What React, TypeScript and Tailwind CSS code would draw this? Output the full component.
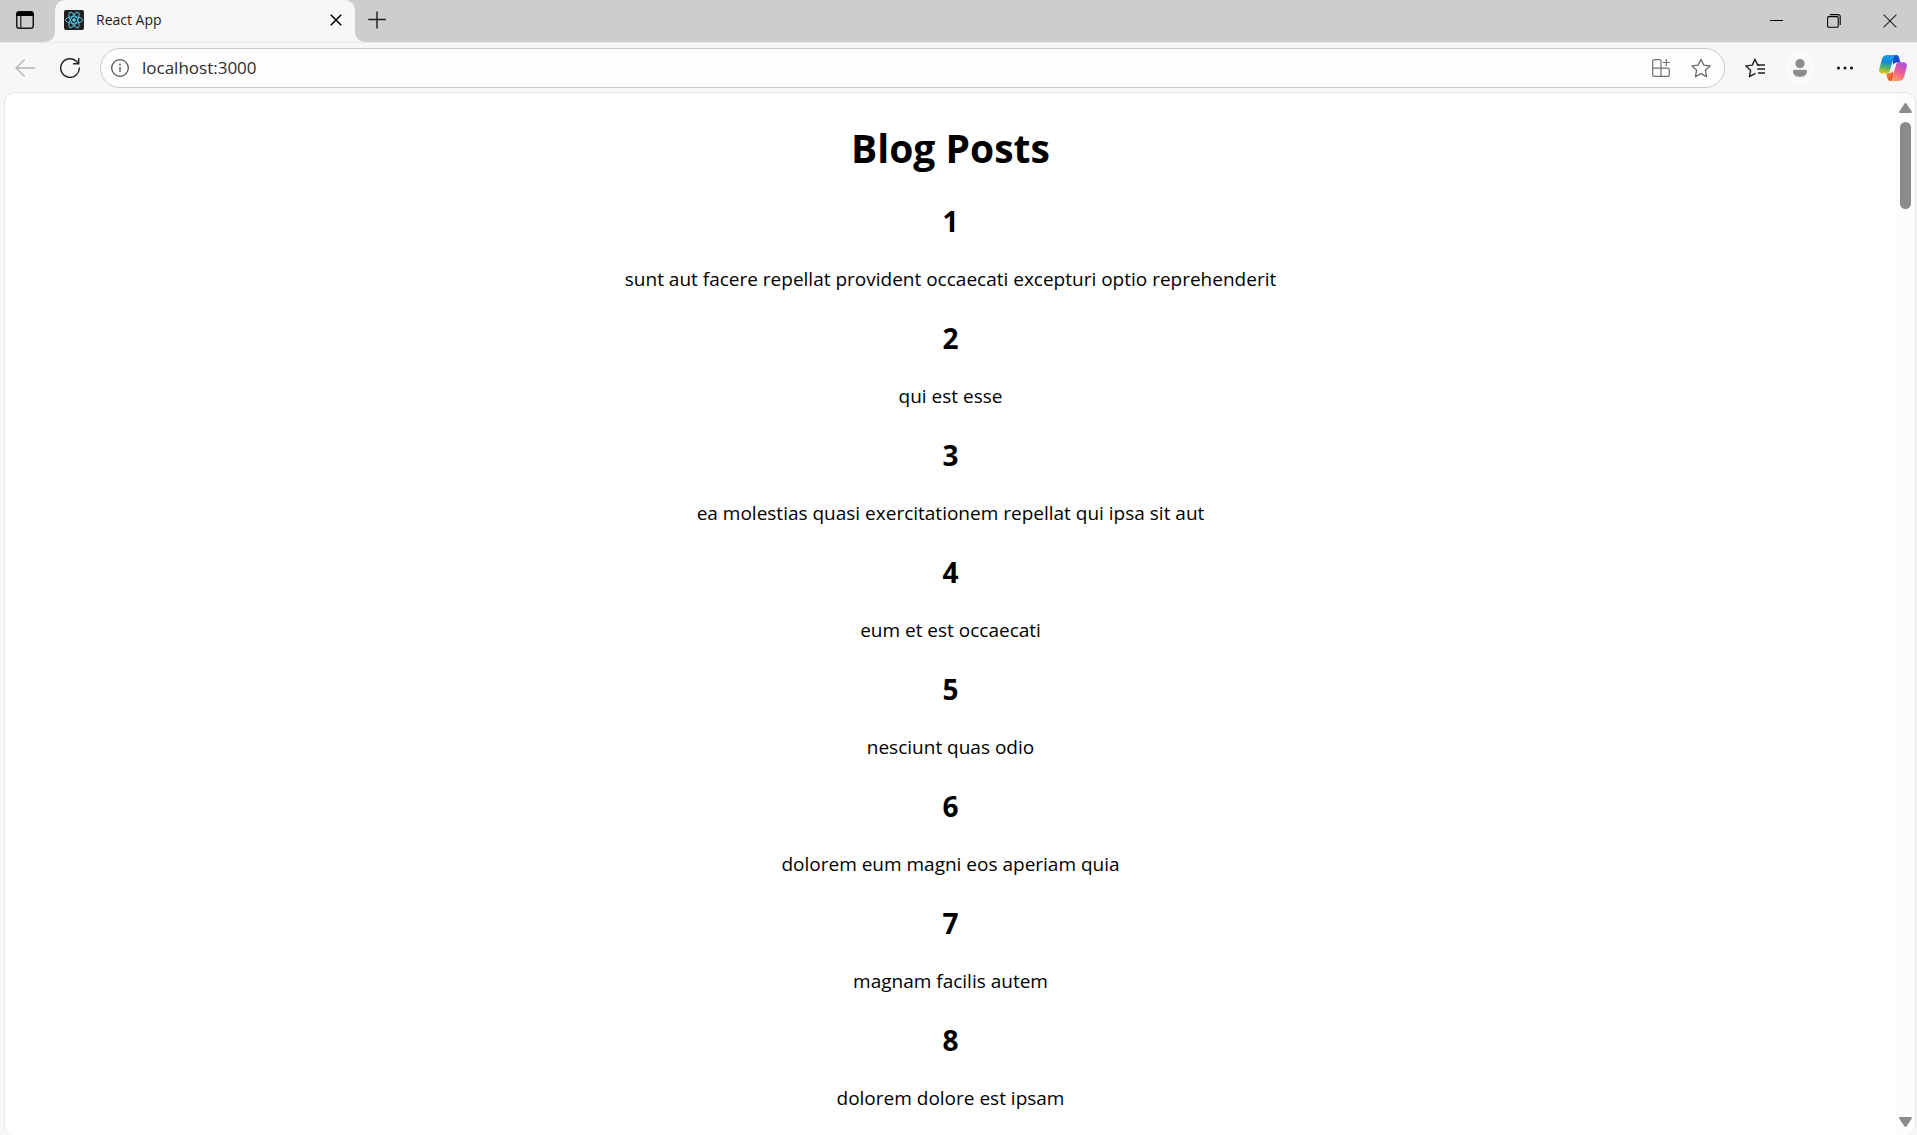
import React from "react";

const posts = [
  { id: 1, title: "sunt aut facere repellat provident occaecati excepturi optio reprehenderit" },
  { id: 2, title: "qui est esse" },
  { id: 3, title: "ea molestias quasi exercitationem repellat qui ipsa sit aut" },
  { id: 4, title: "eum et est occaecati" },
  { id: 5, title: "nesciunt quas odio" },
  { id: 6, title: "dolorem eum magni eos aperiam quia" },
  { id: 7, title: "magnam facilis autem" },
  { id: 8, title: "dolorem dolore est ipsam" },
];

function TabActionsIcon() {
  return (
    <svg width="18" height="18" viewBox="0 0 18 18" fill="none" aria-hidden="true">
      <rect x="0.75" y="0.75" width="16.5" height="16.5" rx="2.5" stroke="#1a1a1a" strokeWidth="1.5" />
      <path d="M0.5 5V3.2A2.7 2.7 0 0 1 3.2 0.5h11.6a2.7 2.7 0 0 1 2.7 2.7V5z" fill="#000" />
      <path d="M4.8 5v12" stroke="#1a1a1a" strokeWidth="1.2" />
    </svg>
  );
}

function ReactFavicon() {
  return (
    <svg width="20" height="20" viewBox="0 0 20 20" fill="none" aria-hidden="true">
      <rect width="20" height="20" rx="2" fill="#222" />
      <g stroke="#53c1de" strokeWidth="1">
        <ellipse cx="10" cy="10" rx="8.6" ry="3.3" />
        <ellipse cx="10" cy="10" rx="8.6" ry="3.3" transform="rotate(60 10 10)" />
        <ellipse cx="10" cy="10" rx="8.6" ry="3.3" transform="rotate(120 10 10)" />
      </g>
      <circle cx="10" cy="10" r="1.7" fill="#61dafb" />
    </svg>
  );
}

function TitleBar() {
  return (
    <header className="flex h-[42px] shrink-0 bg-[#f7f7f7]">
      <div className="flex w-[55px] shrink-0 items-start rounded-br-[10px] bg-[#cdcdcd] pt-[11px] pl-4">
        <button aria-label="Tab actions menu"><TabActionsIcon /></button>
      </div>
      <div className="w-[300px] shrink-0 bg-[#cdcdcd]">
        <div className="flex h-full items-start rounded-t-[10px] bg-[#f7f7f7] pt-[10px] pr-[9px] pl-[9px]">
          <ReactFavicon />
          <span className="ml-3 flex-1 text-[14px] leading-5 text-[#1b1b1b]">React App</span>
          <button aria-label="Close tab" className="flex size-5 items-center justify-center">
            <svg width="12" height="12" viewBox="0 0 12 12" stroke="#000" strokeWidth="1.5" aria-hidden="true">
              <path d="M0.8 0.8l10.4 10.4M11.2 0.8L0.8 11.2" />
            </svg>
          </button>
        </div>
      </div>
      <div className="flex flex-1 items-start justify-between rounded-bl-[10px] bg-[#cdcdcd]">
        <button aria-label="New tab" className="mt-[11px] ml-[13px]">
          <svg width="18" height="18" viewBox="0 0 18 18" stroke="#1b1b1b" strokeWidth="1.4" aria-hidden="true">
            <path d="M9 0.5v17M0.3 8.5h17.5" />
          </svg>
        </button>
        <div className="flex">
          <button aria-label="Minimize" className="flex h-[42px] w-[58px] items-center justify-center">
            <svg width="13" height="14" viewBox="0 0 13 14" stroke="#000" fill="none" aria-hidden="true"><path d="M0 6.5h13" /></svg>
          </button>
          <button aria-label="Restore" className="flex h-[42px] w-[58px] items-center justify-center">
            <svg width="14" height="14" viewBox="0 0 14 14" stroke="#000" fill="none" aria-hidden="true">
              <rect x="0.6" y="2.6" width="10.6" height="10.6" rx="1" strokeWidth="1.1" />
              <path d="M2.8 0.6h8.4a2 2 0 0 1 2 2V11" strokeWidth="1.1" />
            </svg>
          </button>
          <button aria-label="Close window" className="flex h-[42px] w-[54px] items-center justify-center">
            <svg width="14" height="14" viewBox="0 0 14 14" stroke="#222" strokeWidth="1.1" aria-hidden="true">
              <path d="M0.6 0.6l12.8 12.8M13.4 0.6L0.6 13.4" />
            </svg>
          </button>
        </div>
      </div>
    </header>
  );
}

function CopilotIcon() {
  return (
    <svg width="28" height="26" viewBox="0 0 28 26" aria-hidden="true">
      <defs>
        <linearGradient id="cp-left" x1="8" y1="0" x2="5" y2="19" gradientUnits="userSpaceOnUse">
          <stop offset="0" stopColor="#12a5ee" />
          <stop offset="0.35" stopColor="#1488d8" />
          <stop offset="0.65" stopColor="#4fb36b" />
          <stop offset="1" stopColor="#f7cb10" />
        </linearGradient>
        <linearGradient id="cp-top" x1="12" y1="2" x2="20" y2="7" gradientUnits="userSpaceOnUse">
          <stop offset="0" stopColor="#0a5fd0" />
          <stop offset="1" stopColor="#2440c8" />
        </linearGradient>
        <linearGradient id="cp-right" x1="24" y1="7" x2="15" y2="26" gradientUnits="userSpaceOnUse">
          <stop offset="0" stopColor="#a94fe6" />
          <stop offset="0.5" stopColor="#ee5a92" />
          <stop offset="1" stopColor="#fda45c" />
        </linearGradient>
        <linearGradient id="cp-bottom" x1="6" y1="19" x2="14" y2="25" gradientUnits="userSpaceOnUse">
          <stop offset="0" stopColor="#fb8a2c" />
          <stop offset="1" stopColor="#f0443e" />
        </linearGradient>
      </defs>
      <path d="M12 0h5.2c1.5 0 2.4 0.9 2.8 2.3L21.4 7.6H18c-2 0-3 0.9-3.5 2.5z" fill="url(#cp-top)" />
      <path d="M16 26h-4.6c-1.6 0-2.5-0.9-2.9-2.4L7 18.3h3.2c2 0 2.9-1 3.4-2.5z" fill="url(#cp-bottom)" />
      <path d="M8.4 0h8.6c-1.3 0-1.9 1-2.4 2.6l-3.6 13c-0.5 1.9-1.5 3-3.4 3H3.6C0.7 18.6-0.4 16.6 0.3 14L3 4C3.8 1.3 5.6 0 8.4 0z" fill="url(#cp-left)" />
      <path d="M19.6 26h-8.8c1.3 0 2-1 2.4-2.6l3.7-13.2c0.5-1.9 1.5-3 3.4-3h4.1c2.9 0 4 2 3.3 4.6L25 22c-0.8 2.7-2.6 4-5.4 4z" fill="url(#cp-right)" />
    </svg>
  );
}

const STAR = "M10 1.2l2.7 5.9 6.4 0.8-4.7 4.4 1.2 6.4L10 15.6l-5.6 3.1 1.2-6.4L0.9 7.9l6.4-0.8z";

function Toolbar() {
  return (
    <nav className="flex h-[50px] shrink-0 items-center border-t border-[#e9e9e9] bg-[#f7f7f7] pr-[10px] pl-[15px]">
      <button aria-label="Back">
        <svg width="20" height="18" viewBox="0 0 20 18" fill="none" stroke="#b5b5b5" strokeWidth="1.3" aria-hidden="true">
          <path d="M20 9H1M9.6 0.5L1 9l8.6 8.5" />
        </svg>
      </button>
      <button aria-label="Refresh" className="ml-[25px]">
        <svg width="20" height="20" viewBox="0 0 20 20" fill="none" stroke="#222" strokeWidth="1.4" aria-hidden="true">
          <path d="M19.3 9.5A9.3 9.3 0 1 1 15.6 2.6L18.6 5.2" />
          <path d="M18.7 0v5.7h-5.6" />
        </svg>
      </button>
      <div className="ml-5 flex h-10 flex-1 items-center rounded-full border border-[#c8c8c8] bg-[#fdfdfd] pr-[13px] pl-[10px]">
        <button aria-label="View site information">
          <svg width="18" height="18" viewBox="0 0 18 18" fill="none" stroke="#505050" strokeWidth="1.3" aria-hidden="true">
            <circle cx="9" cy="9" r="8.3" />
            <path d="M9 8v5" />
            <circle cx="9" cy="5.5" r="0.9" fill="#505050" stroke="none" />
          </svg>
        </button>
        <input
          aria-label="Address"
          defaultValue="localhost:3000"
          className="ml-[13px] min-w-0 flex-1 bg-transparent text-[17px] leading-6 text-[#2c2c2c] outline-none"
        />
        <button aria-label="Install app" className="mr-[21px]">
          <svg width="18" height="18" viewBox="0 0 18 18" fill="none" stroke="#707070" strokeWidth="1.2" aria-hidden="true">
            <path d="M9 9.2V2.1A1.4 1.4 0 0 0 7.6 0.7H2.1A1.4 1.4 0 0 0 0.7 2.1v13.8a1.4 1.4 0 0 0 1.4 1.4h13.8a1.4 1.4 0 0 0 1.4-1.4v-5.3a1.4 1.4 0 0 0-1.4-1.4H0.7M9 9.2v8.1M14.3 0v7M10.8 3.5h7" />
          </svg>
        </button>
        <button aria-label="Add to favorites">
          <svg width="20" height="20" viewBox="0 0 20 20" fill="none" stroke="#666" strokeWidth="1.3" strokeLinejoin="round" aria-hidden="true">
            <path d={STAR} />
          </svg>
        </button>
      </div>
      <button aria-label="Favorites" className="ml-5">
        <svg width="20" height="20" viewBox="0 0 20 20" fill="none" stroke="#1f1f1f" strokeWidth="1.4" strokeLinejoin="round" aria-hidden="true">
          <path d="M14.2 7.2h-1.5L10 1.2 7.3 7.1 0.9 7.9l4.7 4.4-1.2 6.4 6-3.3" />
          <path d="M13 7h7M12.3 11h7.7M13 15h7" />
        </svg>
      </button>
      <button aria-label="Profile" className="ml-[21px] flex size-7 items-center justify-center rounded-full border border-white bg-[#f9f9f9]">
        <svg width="14" height="18" viewBox="0 0 14 18" fill="#8c8c8c" aria-hidden="true">
          <circle cx="7" cy="4.6" r="4.6" />
          <path d="M1.5 10.8h11A1.5 1.5 0 0 1 14 12.3C14 16 11 17.8 7 17.8S0 16 0 12.3a1.5 1.5 0 0 1 1.5-1.5z" />
        </svg>
      </button>
      <button aria-label="Settings and more" className="ml-[22px]">
        <svg width="18" height="18" viewBox="0 0 18 18" fill="#1b1b1b" aria-hidden="true">
          <circle cx="2.5" cy="9" r="1.6" /><circle cx="9" cy="9" r="1.6" /><circle cx="15.5" cy="9" r="1.6" />
        </svg>
      </button>
      <button aria-label="Copilot" className="ml-[25px]"><CopilotIcon /></button>
    </nav>
  );
}

function ScrollBar() {
  return (
    <div className="flex w-[19px] shrink-0 flex-col items-center bg-[#fcfcfc] pt-[10px] pb-2">
      <svg width="13" height="10" viewBox="0 0 13 10" fill="#8b8b8b" aria-hidden="true">
        <path d="M5.4 0.8a1.4 1.4 0 0 1 2.2 0l5 7.4c0.5 0.9 0.1 1.8-0.9 1.8H1.3c-1 0-1.4-0.9-0.9-1.8z" />
      </svg>
      <div className="mt-[9px] h-[87px] w-[11px] rounded-full bg-[#8b8b8b]" />
      <svg className="mt-auto" width="13" height="10" viewBox="0 0 13 10" fill="#8b8b8b" aria-hidden="true">
        <path d="M5.4 9.2a1.4 1.4 0 0 0 2.2 0l5-7.4C13.1 0.9 12.7 0 11.7 0H1.3C0.3 0-0.1 0.9 0.4 1.8z" />
      </svg>
    </div>
  );
}

export default function App() {
  return (
    <div className="flex h-screen flex-col overflow-hidden bg-[#f7f7f7] font-['Open_Sans','Noto_Sans',sans-serif]">
      <TitleBar />
      <Toolbar />
      <div className="mr-px ml-1 flex min-h-0 flex-1 overflow-hidden rounded-[10px] border border-b-0 border-[#e6e6e6] bg-white">
        <main className="min-w-0 flex-1 overflow-hidden pt-[28px] text-center text-black">
          <h1 className="mb-[27px] text-[39px] leading-[53px] font-bold">Blog Posts</h1>
          {posts.map((post) => (
            <article key={post.id} className="mb-[25px]">
              <h2 className="mb-[25px] text-[28px] leading-10 font-bold">{post.id}</h2>
              <p className="text-[19px] leading-[27px]">{post.title}</p>
            </article>
          ))}
        </main>
        <ScrollBar />
      </div>
    </div>
  );
}
